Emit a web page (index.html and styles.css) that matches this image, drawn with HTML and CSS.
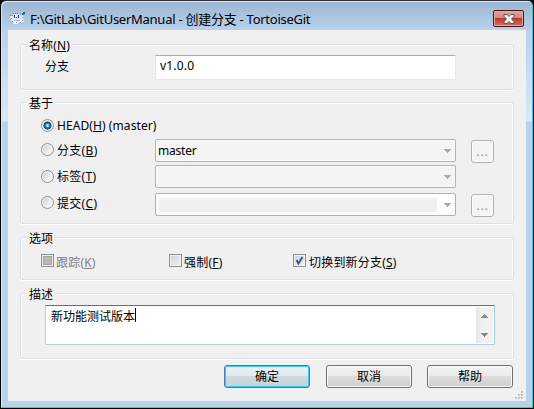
FILE: index.html
```html
<!DOCTYPE html>
<html lang="zh-CN">
<head>
<meta charset="utf-8">
<title>创建分支 - TortoiseGit</title>
<link rel="stylesheet" href="styles.css">
</head>
<body>
<div class="window">
  <header class="titlebar">
    <svg class="app-icon" width="16" height="14" viewBox="0 0 16 14">
      <path d="M0 5h2l1-2h6l2 3v3H3L0 7z" fill="#dfe8f2"/>
      <path d="M3 2h1v1H3zM5 2h1v1H5zM7 2h1v1H7zM0 4h1v1H0zM2 4h1v1H2z" fill="#6d8098"/>
      <path d="M4 4h1v3H4zM8 4h1v3H8zM6 6h1v1H6z" fill="#2c3f7c"/>
      <path d="M1 8h3l2 2h3l2-2h2l1 2-3 2-2-1-2 2H3l1-2H2z" fill="#f8fafc"/>
      <path d="M1 7h1v1H1zM2 10h1v1H2zM4 9h1v1H4zM6 11h1v1H6zM9 9h1v1H9zM10 11h1v1h-1zM12 9h1v1h-1zM7 9h1v1H7z" fill="#8491a1"/>
      <path d="M11 6l1-3h1v3l-1 2h-1z" fill="#f4f8fb"/>
      <path d="M12 1h3v2l-1 1h-2z" fill="#186c8d"/>
      <path d="M12 1h1v1h-1z" fill="#e8f8ff"/>
    </svg>
    <h1 class="title">F:\GitLab\GitUserManual - 创建分支 - TortoiseGit</h1>
    <button class="close" aria-label="关闭">
      <svg width="12" height="10" viewBox="0 0 12 10">
        <path d="M1 .5h3l2 2 2-2h3v1.800L8.600 5 11 7.700v1.800H8l-2-2-2 2H1V7.700L3.400 5 1 2.300z" fill="#f4f4f6" stroke="#535866"/>
      </svg>
    </button>
  </header>
  <main class="client">
    <section class="group name">
      <h2 class="legend">名称(<u>N</u>)</h2>
      <label class="name-label">分支</label>
      <div class="input">v1.0.0</div>
    </section>

    <section class="group base">
      <h2 class="legend">基于</h2>
      <div class="row head"><i class="radio on"></i><span class="wide">HEAD(<u>H</u>) (master)</span></div>
      <div class="row branch"><i class="radio"></i><span class="opt">分支(<u>B</u>)</span>
        <div class="combo"><span>master</span><svg class="arrow" width="7" height="4"><path d="M0 0h7v1H6v1H5v1H4v1H3V3H2V2H1V1H0z"/></svg></div>
        <button class="more">...</button></div>
      <div class="row tag"><i class="radio"></i><span class="opt">标签(<u>T</u>)</span>
        <div class="combo"><span></span><svg class="arrow" width="7" height="4"><path d="M0 0h7v1H6v1H5v1H4v1H3V3H2V2H1V1H0z"/></svg></div></div>
      <div class="row commit"><i class="radio"></i><span class="opt">提交(<u>C</u>)</span>
        <div class="combo editable"><span class="field"></span><svg class="arrow" width="7" height="4"><path d="M0 0h7v1H6v1H5v1H4v1H3V3H2V2H1V1H0z"/></svg></div>
        <button class="more">...</button></div>
    </section>

    <section class="group options">
      <h2 class="legend">选项</h2>
      <label class="check disabled"><i class="box"></i>跟踪(<u>K</u>)</label>
      <label class="check"><i class="box"></i>强制(<u>F</u>)</label>
      <label class="check switch"><i class="box"><svg width="9" height="9"><path d="M1.500 4 3.500 7.500 7.500 1" fill="none" stroke="#44589a" stroke-width="2"/></svg></i>切换到新分支(<u>S</u>)</label>
    </section>

    <section class="group desc">
      <h2 class="legend">描述</h2>
      <div class="textarea">
        <div class="text">新功能测试版本<i class="caret"></i></div>
        <div class="scroll">
          <svg width="7" height="4"><path d="M3 0h1v1h1v1h1v1h1v1H0V3h1V2h1V1h1z"/></svg>
          <svg width="7" height="4"><path d="M0 0h7v1H6v1H5v1H4v1H3V3H2V2H1V1H0z"/></svg>
        </div>
      </div>
    </section>

    <footer class="buttons">
      <button class="btn default">确定</button>
      <button class="btn">取消</button>
      <button class="btn">帮助</button>
    </footer>
    <svg class="grip" width="8" height="8"><path d="M6 0h2v2H6zM3 3h2v2H3zM6 3h2v2H6zM0 6h2v2H0zM3 6h2v2H3zM6 6h2v2H6z" fill="#ccc"/><path d="M6 0h1v1H6zM3 3h1v1H3zM6 3h1v1H6zM0 6h1v1H0zM3 6h1v1H3zM6 6h1v1H6z" fill="#aaa"/></svg>
  </main>
</div>
</body>
</html>
```
FILE: styles.css
```css
* { box-sizing: border-box; }
body {
  margin: 0;
  width: 534px;
  height: 409px;
  overflow: hidden;
  background: #000;
  font: 12px/16px "Noto Sans", "Noto Sans CJK SC", sans-serif;
  color: #000;
}
h1, h2 { margin: 0; font: inherit; }
button { padding: 0; font: inherit; color: inherit; }
i { display: block; flex: none; }
u { text-underline-offset: 1px; text-decoration-thickness: 1px; text-decoration-skip-ink: none; }

.window {
  height: 409px;
  border: 1px solid #000;
  border-top-color: #302f38;
  border-radius: 6px 6px 0 0;
  padding: 0 7px 7px;
  background: linear-gradient(#9ab5d3, #b9d1ea 29px, #dbe8f6 120px, #b9d1ea 121px);
  box-shadow: inset -1px -1px #2fcbea, inset 1px 1px #d9e8f6;
}
.titlebar { display: flex; height: 29px; }
.app-icon { margin: 10px 0 0 2px; }
.title { margin: 9px 0 0 4px; font-size: 13px; line-height: 18px; letter-spacing: -.26px; white-space: nowrap; }
.close {
  display: grid;
  place-items: center;
  width: 31px;
  height: 17px;
  margin: 9px 2px 0 auto;
  border: 1px solid #441523;
  border-radius: 2px;
  background: linear-gradient(#e6a49b, #d88377 48%, #b83b26 50%, #cf7261);
  box-shadow: inset 0 0 0 1px #e5a7a0;
}

.client {
  position: relative;
  height: 371px;
  padding: 14px 12px 0;
  background: #f0f0f0;
}
.group {
  position: relative;
  width: 494px;
  border: 1px solid #d5dfe5;
  border-radius: 3px;
  box-shadow: inset 1px 1px #fff, inset -1px 0 #fff, 0 1px #fff;
}
.legend {
  position: absolute;
  left: 6px;
  top: -7px;
  padding: 0 2px;
  background: #f0f0f0;
  letter-spacing: .1px;
}
.name { display: flex; height: 46px; padding: 10px 0 0 24px; }
.name-label { width: 110px; padding-top: 4px; }
.input {
  width: 301px;
  height: 25px;
  padding: 2px 4px;
  border: 1px solid #e3e9ef;
  border-top-color: #abadb3;
  border-radius: 1px;
  background: #fff;
  letter-spacing: .2px;
}

.base { height: 122px; margin-top: 12px; padding: 13px 0 0 20px; }
.row { display: flex; align-items: flex-start; height: 23px; }
.head { height: 19px; }
.branch { margin-top: 4px; }
.tag { margin-top: 3px; }
.commit { margin-top: 5px; }
.row span { white-space: nowrap; }
.wide { margin: 2px 0 0 3px; letter-spacing: .08px; }
.opt { width: 98px; margin: 4px 0 0 3px; letter-spacing: .3px; }
.commit .opt { margin-top: 3px; }
.radio {
  width: 13px;
  height: 13px;
  margin-top: 4px;
  border: 1px solid #8e8f8f;
  border-radius: 50%;
  background: linear-gradient(135deg, #c5c9ce, #f8f8f8 75%);
  box-shadow: inset 0 0 0 1px #f7f7f7;
}
.tag .radio { margin-top: 5px; }
.head .radio, .commit .radio { margin-top: 3px; }
.radio.on { background: radial-gradient(circle at 50% 50%, #9be2fa 0 1px, #2386b8 2px, #123f65 3.500px, #dfe5e9 4.500px); }
.combo {
  display: flex;
  align-items: center;
  justify-content: space-between;
  width: 301px;
  height: 23px;
  padding: 0 4px 0 2px;
  border: 1px solid #adb2b5;
  border-radius: 2px;
  background: #f4f4f4;
  box-shadow: inset 0 0 0 1px #fcfcfc;
}
.combo span { letter-spacing: -.2px; }
.editable { background: #fff; }
.field { width: 278px; height: 14px; margin-left: 1px; background: #f0f0f0; }
.arrow { margin-top: 1px; fill: #aaa; }
.more {
  width: 23px;
  height: 23px;
  margin: 1px 0 0 15px;
  border: 1px solid #adb2b5;
  border-radius: 3px;
  background: #f4f4f4;
  box-shadow: inset 0 0 0 1px #fcfcfc;
  color: #8993a5;
  letter-spacing: .8px;
}

.options { display: grid; grid-template-columns: 128px 124px 1fr; height: 43px; margin-top: 13px; padding: 16px 0 0 20px; }
.check { display: flex; height: 16px; line-height: 17px; letter-spacing: .2px; }
.box {
  width: 13px;
  height: 13px;
  margin-right: 2px;
  border: 1px solid #8e8f8f;
  background: linear-gradient(135deg, #cbcfd5, #f6f6f6);
  box-shadow: inset 0 0 0 1px #f4f4f4;
}
.box svg { display: block; margin: 1px; }
.switch .box { margin-right: 3px; }
.disabled { color: #808080; }
.disabled .box { background: #b8b8b8; box-shadow: inset 0 0 0 1px #f0f0f0, inset 0 0 0 2px #a5a5a5; }

.desc { height: 66px; margin-top: 13px; padding: 11px 0 0 24px; }
.textarea {
  display: flex;
  justify-content: space-between;
  width: 450px;
  height: 40px;
  padding: 1px;
  border: 1px solid #b5cfe7;
  border-top-color: #3d7bad;
  border-right-color: #a4c9e3;
  border-radius: 1px;
  background: #fff;
}
.text { display: flex; padding: 2px 0 0 4px; }
.caret { width: 1px; height: 14px; margin-top: -1px; background: #000; }
.scroll {
  display: flex;
  flex-direction: column;
  align-items: center;
  justify-content: space-between;
  width: 17px;
  padding: 7px 0 6px;
  background: linear-gradient(90deg, #e5e5e5, #f0f0f0 30%, #f2f2f2);
  fill: #888;
}

.buttons { display: flex; justify-content: flex-end; gap: 16px; margin-top: 6px; padding-right: 1px; }
.btn {
  width: 86px;
  height: 23px;
  border: 1px solid #707070;
  border-radius: 3px;
  background: linear-gradient(#f2f2f2, #ebebeb 48%, #dddddd 50%, #cfcfcf);
  box-shadow: inset 0 0 0 1px #fafafa;
}
.btn:last-child { margin-left: -1px; }
.default {
  border-color: #3c7fb1;
  background: linear-gradient(#eef1f3, #e2e8ec 48%, #d0d8de 50%, #c9d2d9);
  box-shadow: inset 0 0 0 1px #35cdf5;
}
.grip { position: absolute; right: 3px; bottom: 2px; }
```
